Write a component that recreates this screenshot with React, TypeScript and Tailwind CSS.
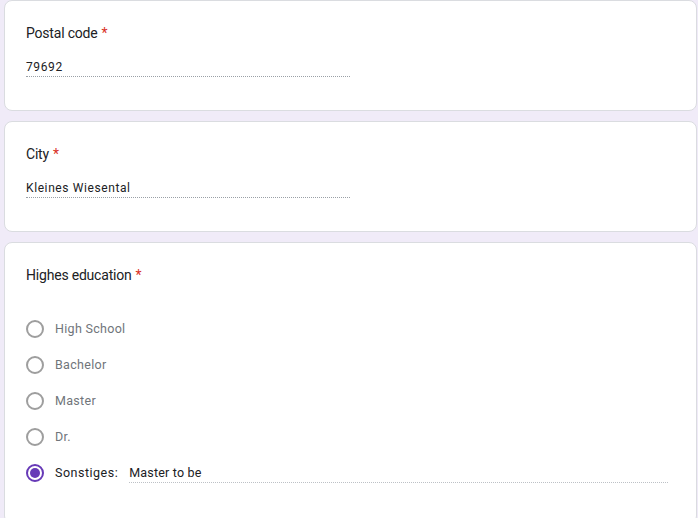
import React, { useState } from "react";

const options = ["High School", "Bachelor", "Master", "Dr."];

function Required() {
  return <span className="text-[#d93025] ml-1">*</span>;
}

function TextQuestion({ title, value }: { title: string; value: string }) {
  return (
    <div className="bg-white border border-[#dadce0] rounded-lg px-[21px] pt-[22px] pb-[33px]">
      <div className="text-[14px] leading-5 text-[#202124] tracking-[-0.2px]">
        {title}
        <Required />
      </div>
      <div className="mt-[14px] w-[324px] border-b border-dotted border-[#9aa0a6] h-5 flex items-center text-[12px] text-[#202124] tracking-[0.6px]">
        {value}
      </div>
    </div>
  );
}

export default function App() {
  const [choice, setChoice] = useState("other");
  const [other, setOther] = useState("Master to be");

  return (
    <div
      className="min-h-[518px] bg-[#f0ebf8] pl-[4px] pr-[1px] pt-[0px] flex flex-col gap-[10px]"
      style={{ fontFamily: "Roboto, 'Liberation Sans', sans-serif" }}
    >
      <TextQuestion title="Postal code" value="79692" />
      <TextQuestion title="City" value="Kleines Wiesental" />

      <div className="bg-white border border-[#dadce0] rounded-lg px-[21px] pt-[22px] pb-10">
        <div className="text-[14px] leading-5 text-[#202124] tracking-[-0.2px]">
          Highes education
          <Required />
        </div>
        <div className="mt-[34px] flex flex-col gap-4">
          {options.map((o) => (
            <label key={o} className="flex items-center h-5 cursor-pointer" onClick={() => setChoice(o)}>
              <span className="w-[18px] h-[18px] rounded-full border-2 border-[#9e9e9e] flex items-center justify-center" />
              <span className="ml-[11px] text-[12.5px] text-[#70757a] tracking-[0.3px]">{o}</span>
            </label>
          ))}
          <div className="flex items-center h-5">
            <span
              className={`w-[18px] h-[18px] rounded-full border-2 flex items-center justify-center ${
                choice === "other" ? "border-[#673ab7]" : "border-[#9e9e9e]"
              }`}
              onClick={() => setChoice("other")}
            >
              {choice === "other" && <span className="w-[10px] h-[10px] rounded-full bg-[#673ab7]" />}
            </span>
            <span className="ml-[11px] text-[12.5px] text-[#202124] tracking-[0.5px]">Sonstiges:</span>
            <input
              className="ml-[11px] w-[539px] h-5 border-b border-dotted border-[#bdc1c6] text-[12.5px] text-[#202124] tracking-[0.2px] outline-none"
              value={other}
              onChange={(e) => setOther(e.target.value)}
            />
          </div>
        </div>
      </div>
    </div>
  );
}
